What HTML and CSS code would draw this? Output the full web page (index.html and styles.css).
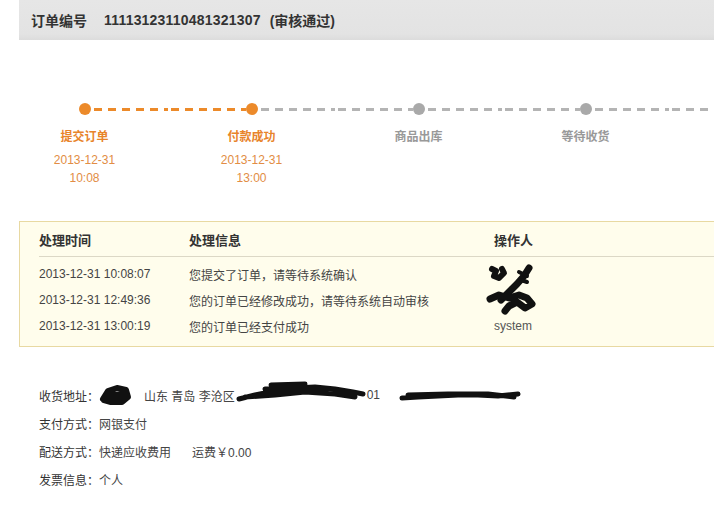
FILE: index.html
```html
<!DOCTYPE html>
<html lang="zh-CN">
<head>
<meta charset="utf-8">
<title>订单详情</title>
<link rel="stylesheet" href="styles.css">
</head>
<body>
<div class="order-head">
  <span class="oh-title">订单编号</span>
  <span class="oh-num">11113123110481321307</span>
  <span class="oh-status">(审核通过)</span>
</div>

<div class="steps">
  <div class="step done">
    <div class="track"><span class="half none"></span><span class="dot"></span><span class="half on"></span></div>
    <div class="s-label">提交订单</div>
    <div class="s-date">2013-12-31<br>10:08</div>
  </div>
  <div class="step done">
    <div class="track"><span class="half on"></span><span class="dot"></span><span class="half off"></span></div>
    <div class="s-label">付款成功</div>
    <div class="s-date">2013-12-31<br>13:00</div>
  </div>
  <div class="step">
    <div class="track"><span class="half off"></span><span class="dot"></span><span class="half off"></span></div>
    <div class="s-label">商品出库</div>
  </div>
  <div class="step">
    <div class="track"><span class="half off"></span><span class="dot"></span><span class="half off"></span></div>
    <div class="s-label">等待收货</div>
  </div>
  <div class="tail"></div>
</div>

<div class="log">
  <div class="log-row log-head">
    <div class="c-time">处理时间</div>
    <div class="c-info">处理信息</div>
    <div class="c-op">操作人</div>
  </div>
  <div class="log-body">
    <div class="log-row">
      <div class="c-time">2013-12-31 10:08:07</div>
      <div class="c-info">您提交了订单，请等待系统确认</div>
      <div class="c-op">
        <svg class="op-scribble" width="50" height="50" viewBox="0 0 50 50">
          <g fill="none" stroke="#111" stroke-linecap="round" stroke-linejoin="round">
            <path d="M5 5 L9 7 L7 12 L12 14 L17 9 L15 5" stroke-width="6"/>
            <path d="M42 4 L37 12 L30 20 L22 28 L14 36" stroke-width="7"/>
            <path d="M32 8 L40 12 M34 16 L40 18" stroke-width="4"/>
            <path d="M3 35 L12 31 L22 34 L32 31 L40 34 L45 40 L38 44 L30 38 L22 42 L18 47" stroke-width="7"/>
          </g>
        </svg>
      </div>
    </div>
    <div class="log-row">
      <div class="c-time">2013-12-31 12:49:36</div>
      <div class="c-info">您的订单已经修改成功，请等待系统自动审核</div>
      <div class="c-op"></div>
    </div>
    <div class="log-row">
      <div class="c-time">2013-12-31 13:00:19</div>
      <div class="c-info">您的订单已经支付成功</div>
      <div class="c-op op-sys">system</div>
    </div>
  </div>
</div>

<div class="info">
  <div class="i-row">
    <span class="i-label">收货地址：</span>
    <svg class="scr scr-a" width="34" height="22" viewBox="0 0 34 22">
      <path d="M5 15 L10 7 L19 4 L28 6 L30 13 L24 18 L13 18 L6 16 M9 11 L27 10 M10 14 L25 14" fill="none" stroke="#111" stroke-width="6" stroke-linecap="round" stroke-linejoin="round"/>
    </svg>
    <span class="i-val addr">山东&nbsp;青岛&nbsp;李沧区</span><svg class="scr scr-b" width="132" height="22" viewBox="0 0 132 22">
      <path d="M4 18 L20 14 L40 10 L60 7 L80 6 L100 8 L118 11 L128 13 M10 16 L40 14 L70 11 L100 13 L120 16 M30 8 L60 6 L90 8 M36 4 L70 3" fill="none" stroke="#111" stroke-width="5" stroke-linecap="round" stroke-linejoin="round"/>
    </svg><span class="i-val">01</span>
    <svg class="scr scr-c" width="124" height="16" viewBox="0 0 124 16">
      <path d="M4 11 L20 10 L40 9 L60 8 L80 8 L100 9 L120 7 M10 8 L50 7 L90 7 L116 10" fill="none" stroke="#111" stroke-width="5" stroke-linecap="round" stroke-linejoin="round"/>
    </svg>
  </div>
  <div class="i-row"><span class="i-label">支付方式：</span><span class="i-val">网银支付</span></div>
  <div class="i-row"><span class="i-label">配送方式：</span><span class="i-val">快递应收费用</span><span class="i-val fee">运费￥0.00</span></div>
  <div class="i-row"><span class="i-label">发票信息：</span><span class="i-val">个人</span></div>
</div>
</body>
</html>
```

FILE: styles.css
```css
html, body {
  margin: 0;
  padding: 0;
  background: #fff;
  overflow: hidden;
}
body {
  font-family: "Liberation Sans", "Noto Sans CJK SC", sans-serif;
  font-size: 12px;
  color: #333;
  width: 714px;
}

.order-head {
  margin-left: 19px;
  height: 40px;
  background: linear-gradient(#e6e6e6, #e3e3e3 85%, #dcdcdc);
  display: flex;
  align-items: center;
  padding-left: 12px;
  font-weight: bold;
  font-size: 14px;
  color: #333;
}
.oh-num {
  margin-left: 17px;
  letter-spacing: 0.2px;
}
.oh-status {
  margin-left: 9px;
}

.steps {
  display: flex;
  margin-top: 63px;
  margin-left: 1px;
}
.step {
  width: 167px;
  flex: none;
  display: flex;
  flex-direction: column;
  align-items: center;
}
.track {
  width: 100%;
  height: 12px;
  display: flex;
  align-items: center;
}
.half {
  flex: 1;
  height: 3px;
}
.half.on {
  background: repeating-linear-gradient(to right, transparent 0 3px, #ec8a2a 3px 11px, transparent 11px 14px);
}
.half.off {
  background: repeating-linear-gradient(to right, transparent 0 3px, #b4b4b4 3px 11px, transparent 11px 14px);
}
.dot {
  width: 12px;
  height: 12px;
  border-radius: 50%;
  background: #a9a9a9;
  flex: none;
}
.step.done .dot {
  background: #ec8a2a;
}
.tail {
  flex: 1;
  height: 3px;
  margin-top: 4.5px;
  background: repeating-linear-gradient(to right, transparent 0 3px, #b4b4b4 3px 11px, transparent 11px 14px);
}
.s-label {
  margin-top: 14px;
  font-size: 12px;
  line-height: 16px;
  font-weight: bold;
  color: #999;
}
.step.done .s-label {
  color: #e8842a;
}
.s-date {
  margin-top: 6px;
  font-size: 12px;
  line-height: 18px;
  color: #e28d44;
  text-align: center;
}

.log {
  margin-top: 34px;
  margin-left: 19px;
  border: 1px solid #e8d9a2;
  border-right: none;
  background: #fffdec;
  padding-left: 19px;
}
.log-row {
  display: flex;
  height: 26px;
  align-items: center;
}
.log-head {
  height: 34px;
  font-weight: bold;
  font-size: 13px;
  color: #333;
  border-bottom: 1px solid #dcd8c6;
}
.log-body {
  padding: 4px 0 7px;
  color: #444;
}
.c-time {
  width: 150px;
  flex: none;
}
.c-info {
  width: 305px;
  flex: none;
}
.c-op {
  flex: 1;
  height: 26px;
  display: flex;
  align-items: center;
}
.op-sys {
  color: #555;
}
.op-scribble {
  display: block;
  align-self: flex-start;
  margin-top: 3px;
  margin-left: -7px;
  overflow: visible;
}

.info {
  margin-top: 34px;
  margin-left: 39px;
}
.i-row {
  height: 28px;
  display: flex;
  align-items: center;
  white-space: nowrap;
}
.i-label {
  color: #333;
}
.i-val {
  color: #444;
}
.addr {
  margin-left: 12px;
}
.scr {
  display: block;
  flex: none;
}
.scr-a {
  margin-left: -1px;
}
.scr-b {
  margin-top: -6px;
}
.scr-c {
  margin-left: 18px;
}
.fee {
  margin-left: 21px;
}
```
